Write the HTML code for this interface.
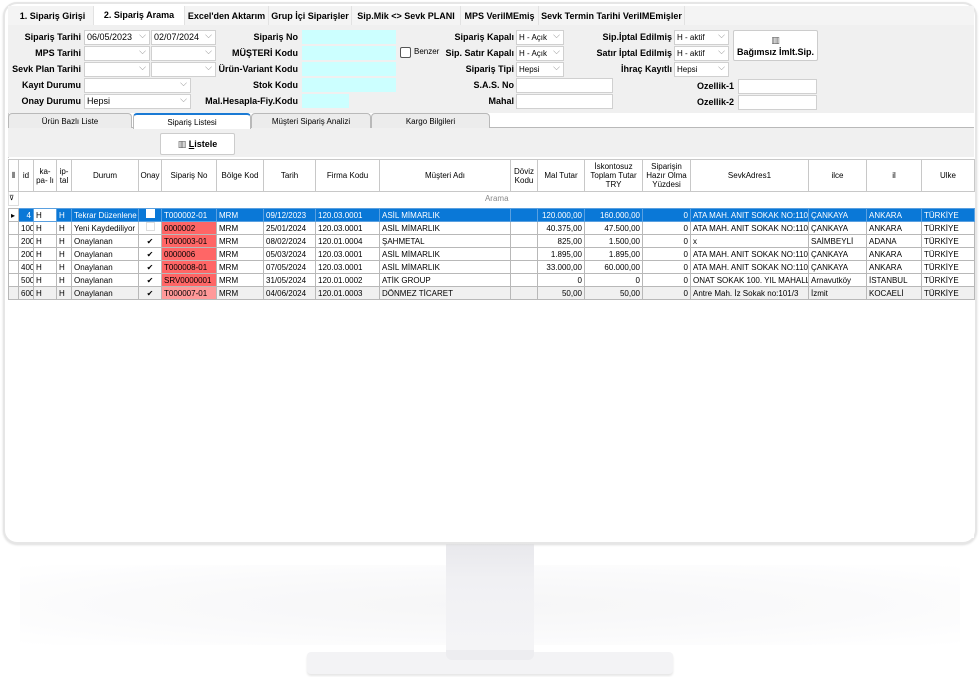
<!DOCTYPE html>
<html><head><meta charset="utf-8">
<style>
*{box-sizing:border-box;margin:0;padding:0}
body{width:980px;height:677px;background:#fff;position:relative;overflow:hidden;font-family:"Liberation Sans","DejaVu Sans",sans-serif;color:#000}
.a{position:absolute}
.frame{left:3px;top:2px;width:974px;height:542px;border:2px solid #e6e6e6;border-radius:14px;background:#fff;box-shadow:0 1px 2px #ddd}
.app{left:8px;top:6px;width:966px;height:530px;background:#fff;border-left:1px solid #cfcfcf}
.tabs{left:8px;top:6px;width:966px;height:19px;background:#f4f4f4}
.tab{position:absolute;top:6px;height:19px;font-size:9px;font-weight:bold;text-align:center;line-height:20px;white-space:nowrap;border-right:1px solid #e2e2e2}
.form{left:8px;top:25px;width:966px;height:88px;background:#f0f0f0}
.lb{position:absolute;font-size:9px;font-weight:bold;text-align:right;white-space:nowrap;line-height:14px}
.in{position:absolute;height:15px;background:#fff;border:1px solid #d0d0d0;font-size:9px;line-height:13px;padding-left:2px;white-space:nowrap;overflow:hidden}
.cy{background:#ccffff;border:1px solid #f0f0f0;height:16px}
.dd:after{content:"⌵";position:absolute;right:3px;top:-2px;color:#888;font-size:9px}
.st{position:absolute;top:113px;height:15px;font-size:8px;text-align:center;line-height:15px;background:#ececec;border:1px solid #b9b9b9;border-bottom:none;border-radius:4px 4px 0 0}
.btn{position:absolute;background:#fff;border:1px solid #ccc;border-radius:2px;font-size:9px;font-weight:bold;text-align:center}
table{border-collapse:collapse;font-size:8px;table-layout:fixed}
td{border:1px solid #b8b8b8;height:13px;padding:0 2px;white-space:nowrap;overflow:hidden;line-height:11px}
th{border:1px solid #c8c8c8;font-weight:normal;font-size:8px;background:#fff;height:32px;line-height:9px;text-align:center;overflow:hidden}
.r{text-align:right}
.sel td{background:#0a78d7;color:#fff;border-color:#5aa0e0}
.red{background:#ff6666}
.pink{background:#ff9999}
.cb{display:inline-block;width:9px;height:9px;border:1px solid #aaa;background:#fff;font-size:8px;line-height:8px;text-align:center;color:#000}
</style></head><body>
<!-- stand -->
<div class="a" style="left:20px;top:565px;width:940px;height:80px;background:radial-gradient(ellipse at center,#f6f6f7 0%,#fafafb 55%,#fff 100%)"></div>
<div class="a" style="left:446px;top:544px;width:88px;height:116px;background:linear-gradient(#e8e8ec,#f0f0f3 30%,#f5f5f7)"></div>
<div class="a" style="left:307px;top:652px;width:366px;height:22px;background:#f3f3f5;border-radius:4px;box-shadow:0 2px 2px #e6e6e6"></div>
<div class="a" style="left:446px;top:650px;width:88px;height:10px;background:#ededf0;border-radius:0 0 6px 6px"></div>
<div class="a frame"></div>
<div class="a app"></div>
<div class="a tabs"></div>
<div class="tab" style="left:12px;width:82px">1. Sipariş Girişi</div>
<div class="tab" style="left:94px;width:91px;background:#fff;top:6px;height:20px;line-height:18px">2. Sipariş Arama</div>
<div class="tab" style="left:185px;width:84px">Excel'den Aktarım</div>
<div class="tab" style="left:269px;width:83px">Grup İçi Siparişler</div>
<div class="tab" style="left:352px;width:109px">Sip.Mik &lt;&gt; Sevk PLANI</div>
<div class="tab" style="left:461px;width:78px">MPS VerilMEmiş</div>
<div class="tab" style="left:539px;width:146px">Sevk Termin Tarihi VerilMEmişler</div>
<div class="a form"></div>

<div class="lb" style="left:0;width:81px;top:30px">Sipariş Tarihi</div>
<div class="lb" style="left:0;width:81px;top:46px">MPS Tarihi</div>
<div class="lb" style="left:0;width:81px;top:62px">Sevk Plan Tarihi</div>
<div class="lb" style="left:0;width:81px;top:78px">Kayıt Durumu</div>
<div class="lb" style="left:0;width:81px;top:94px">Onay Durumu</div>
<div class="in dd" style="left:84px;top:30px;width:66px">06/05/2023</div>
<div class="in dd" style="left:151px;top:30px;width:65px">02/07/2024</div>
<div class="in dd" style="left:84px;top:46px;width:66px"></div>
<div class="in dd" style="left:151px;top:46px;width:65px"></div>
<div class="in dd" style="left:84px;top:62px;width:66px"></div>
<div class="in dd" style="left:151px;top:62px;width:65px"></div>
<div class="in dd" style="left:84px;top:78px;width:107px"></div>
<div class="in dd" style="left:84px;top:94px;width:107px">Hepsi</div>

<div class="lb" style="left:190px;width:108px;top:30px">Sipariş No</div>
<div class="lb" style="left:190px;width:108px;top:46px">MÜŞTERİ Kodu</div>
<div class="lb" style="left:190px;width:108px;top:62px">Ürün-Variant Kodu</div>
<div class="lb" style="left:190px;width:108px;top:78px">Stok Kodu</div>
<div class="lb" style="left:190px;width:108px;top:94px">Mal.Hesapla-Fiy.Kodu</div>
<div class="in cy" style="left:301px;top:29px;width:96px"></div>
<div class="in cy" style="left:301px;top:45px;width:96px"></div>
<div class="in cy" style="left:301px;top:61px;width:96px"></div>
<div class="in cy" style="left:301px;top:77px;width:96px"></div>
<div class="in cy" style="left:301px;top:93px;width:49px"></div>
<div class="a" style="left:400px;top:47px;width:11px;height:11px;border:1px solid #555;border-radius:2px;background:#fff"></div>
<div class="a" style="left:414px;top:47px;font-size:8px">Benzer</div>

<div class="lb" style="left:420px;width:94px;top:30px">Sipariş Kapalı</div>
<div class="lb" style="left:420px;width:94px;top:46px">Sip. Satır Kapalı</div>
<div class="lb" style="left:420px;width:94px;top:62px">Sipariş Tipi</div>
<div class="lb" style="left:420px;width:94px;top:78px">S.A.S. No</div>
<div class="lb" style="left:420px;width:94px;top:94px">Mahal</div>
<div class="in dd" style="left:516px;top:30px;width:48px;font-size:8px">H - Açık</div>
<div class="in dd" style="left:516px;top:46px;width:48px;font-size:8px">H - Açık</div>
<div class="in dd" style="left:516px;top:62px;width:48px;font-size:8px">Hepsi</div>
<div class="in" style="left:516px;top:78px;width:97px"></div>
<div class="in" style="left:516px;top:94px;width:97px"></div>

<div class="lb" style="left:570px;width:102px;top:30px">Sip.İptal Edilmiş</div>
<div class="lb" style="left:570px;width:102px;top:46px">Satır İptal Edilmiş</div>
<div class="lb" style="left:570px;width:102px;top:62px">İhraç Kayıtlı</div>
<div class="lb" style="left:620px;width:114px;top:79px">Ozellik-1</div>
<div class="lb" style="left:620px;width:114px;top:95px">Ozellik-2</div>
<div class="in dd" style="left:674px;top:30px;width:55px;font-size:8px">H - aktif</div>
<div class="in dd" style="left:674px;top:46px;width:55px;font-size:8px">H - aktif</div>
<div class="in dd" style="left:674px;top:62px;width:55px;font-size:8px">Hepsi</div>
<div class="in" style="left:738px;top:79px;width:79px"></div>
<div class="in" style="left:738px;top:95px;width:79px"></div>
<div class="btn" style="left:733px;top:30px;width:85px;height:31px;padding-top:3px;line-height:12px"><span style="color:#555">▥</span><br>Bağımsız İmlt.Sip.</div>

<!-- subtabs -->
<div class="a" style="left:8px;top:127px;width:966px;height:30px;background:#f0f0f0;border-top:1px solid #b9b9b9"></div>
<div class="st" style="left:8px;width:124px">Ürün Bazlı Liste</div>
<div class="st" style="left:133px;width:118px;background:#fff;border-top:2px solid #1a7ad4;height:16px">Sipariş Listesi</div>
<div class="st" style="left:251px;width:120px">Müşteri Sipariş Analizi</div>
<div class="st" style="left:371px;width:119px">Kargo Bilgileri</div>
<div class="btn" style="left:160px;top:133px;width:75px;height:22px;line-height:21px"><span style="color:#555">▥</span> <u>L</u>istele</div>

<!-- grid -->
<div class="a" style="left:8px;top:158px;width:966px;height:380px;background:#fff"></div>
<table class="a" style="left:8px;top:159px;width:966px">
<colgroup><col style="width:10px"><col style="width:15px"><col style="width:23px"><col style="width:15px"><col style="width:67px"><col style="width:23px"><col style="width:55px"><col style="width:47px"><col style="width:52px"><col style="width:64px"><col style="width:131px"><col style="width:27px"><col style="width:47px"><col style="width:58px"><col style="width:48px"><col style="width:118px"><col style="width:58px"><col style="width:55px"><col style="width:53px"></colgroup>
<tr><th>⫴</th><th>id</th><th>ka-<br>pa- lı</th><th>ip-<br>tal</th><th>Durum</th><th>Onay</th><th>Sipariş No</th><th>Bölge Kod</th><th>Tarih</th><th>Firma Kodu</th><th>Müşteri Adı</th><th>Döviz<br>Kodu</th><th>Mal Tutar</th><th>İskontosuz<br>Toplam Tutar<br>TRY</th><th>Siparişin<br>Hazır Olma<br>Yüzdesi</th><th>SevkAdres1</th><th>ilce</th><th>il</th><th>Ulke</th></tr>
<tr><td style="border-color:#ddd;font-size:7px;padding:0">⊽</td><td colspan="18" style="border:none;text-align:center;color:#888;height:14px">Arama</td></tr>
<tr style="height:3px"><td colspan="19" style="border:none;height:3px;padding:0"></td></tr>
<tr class="sel"><td style="background:#fff;color:#000;border-color:#b8b8b8">▸</td><td class="r">4</td><td style="background:#fff;color:#000">H</td><td>H</td><td>Tekrar Düzenlene</td><td style="text-align:center"><span class="cb" style="border-color:#fff"></span></td><td>T000002-01</td><td>MRM</td><td>09/12/2023</td><td>120.03.0001</td><td>ASİL MİMARLIK</td><td></td><td class="r">120.000,00</td><td class="r">160.000,00</td><td class="r">0</td><td>ATA MAH. ANIT SOKAK NO:110,</td><td>ÇANKAYA</td><td>ANKARA</td><td>TÜRKİYE</td></tr>
<tr><td></td><td>100</td><td>H</td><td>H</td><td>Yeni Kaydediliyor</td><td style="text-align:center"><span class="cb" style="border-color:#ddd"></span></td><td class="red">0000002</td><td>MRM</td><td>25/01/2024</td><td>120.03.0001</td><td>ASİL MİMARLIK</td><td></td><td class="r">40.375,00</td><td class="r">47.500,00</td><td class="r">0</td><td>ATA MAH. ANIT SOKAK NO:110,</td><td>ÇANKAYA</td><td>ANKARA</td><td>TÜRKİYE</td></tr>
<tr><td></td><td>200</td><td>H</td><td>H</td><td>Onaylanan</td><td style="text-align:center">✔</td><td class="red">T000003-01</td><td>MRM</td><td>08/02/2024</td><td>120.01.0004</td><td>ŞAHMETAL</td><td></td><td class="r">825,00</td><td class="r">1.500,00</td><td class="r">0</td><td>x</td><td>SAİMBEYLİ</td><td>ADANA</td><td>TÜRKİYE</td></tr>
<tr><td></td><td>200</td><td>H</td><td>H</td><td>Onaylanan</td><td style="text-align:center">✔</td><td class="red">0000006</td><td>MRM</td><td>05/03/2024</td><td>120.03.0001</td><td>ASİL MİMARLIK</td><td></td><td class="r">1.895,00</td><td class="r">1.895,00</td><td class="r">0</td><td>ATA MAH. ANIT SOKAK NO:110,</td><td>ÇANKAYA</td><td>ANKARA</td><td>TÜRKİYE</td></tr>
<tr><td></td><td>400</td><td>H</td><td>H</td><td>Onaylanan</td><td style="text-align:center">✔</td><td class="red">T000008-01</td><td>MRM</td><td>07/05/2024</td><td>120.03.0001</td><td>ASİL MİMARLIK</td><td></td><td class="r">33.000,00</td><td class="r">60.000,00</td><td class="r">0</td><td>ATA MAH. ANIT SOKAK NO:110,</td><td>ÇANKAYA</td><td>ANKARA</td><td>TÜRKİYE</td></tr>
<tr><td></td><td>500</td><td>H</td><td>H</td><td>Onaylanan</td><td style="text-align:center">✔</td><td class="red">SRV0000001</td><td>MRM</td><td>31/05/2024</td><td>120.01.0002</td><td>ATİK GROUP</td><td></td><td class="r">0</td><td class="r">0</td><td class="r">0</td><td>ONAT SOKAK 100. YIL MAHALLE</td><td>Arnavutköy</td><td>İSTANBUL</td><td>TÜRKİYE</td></tr>
<tr style="background:#f0f0f0"><td></td><td>600</td><td>H</td><td>H</td><td>Onaylanan</td><td style="text-align:center">✔</td><td class="pink">T000007-01</td><td>MRM</td><td>04/06/2024</td><td>120.01.0003</td><td>DÖNMEZ TİCARET</td><td></td><td class="r">50,00</td><td class="r">50,00</td><td class="r">0</td><td>Antre Mah. İz Sokak no:101/3</td><td>İzmit</td><td>KOCAELİ</td><td>TÜRKİYE</td></tr>
</table>
</body></html>
